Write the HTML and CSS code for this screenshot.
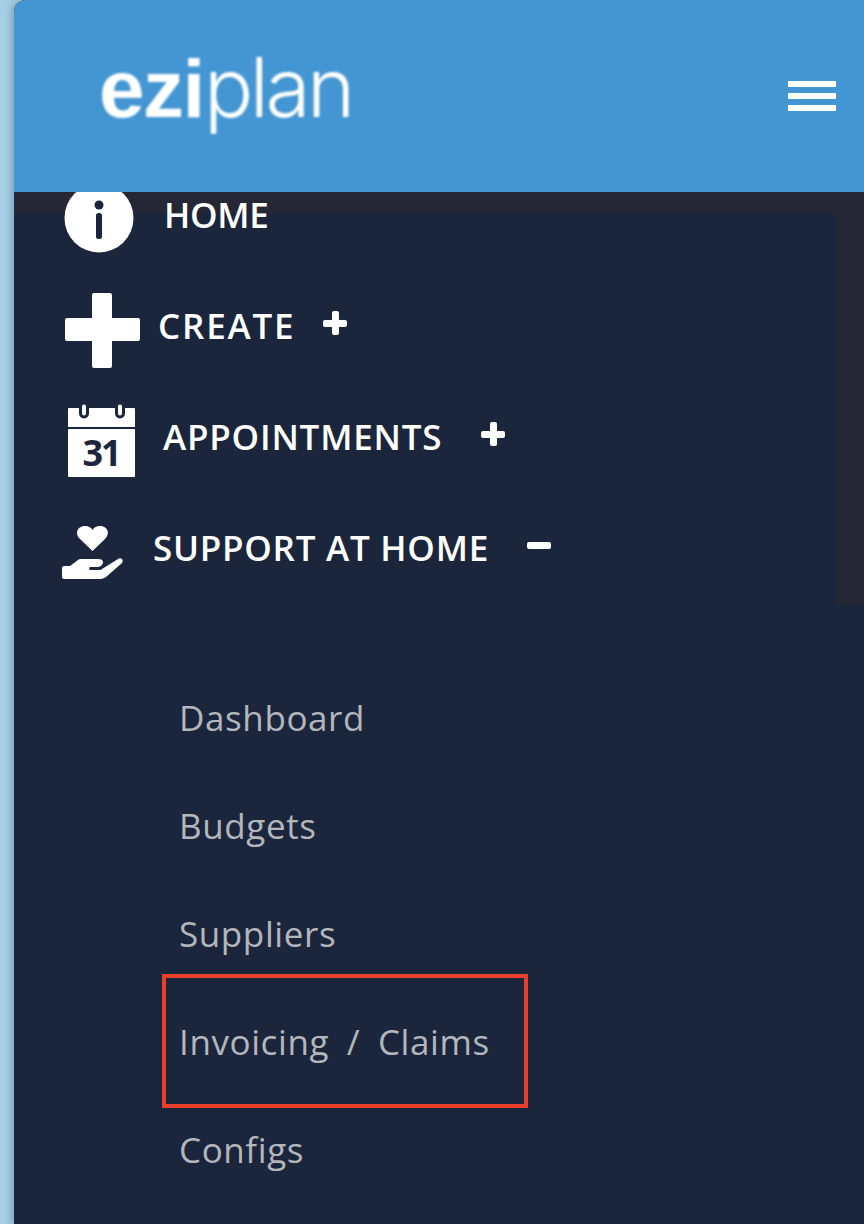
FILE: index.html
```html
<!doctype html>
<html>

<head>
    <link rel="stylesheet" href="styles.css">
</head>

<body>
    <div id="app">
        <header class="topbar">
            <div class="logo"><b>ezi</b><span>plan</span></div>
            <div class="burger"><i></i><i></i><i></i></div>
        </header>
        <div class="sidebar">
            <div class="sidebar-band"></div>
            <nav class="menu">
                <a class="menu-row row-home">
                    <svg class="icon" viewBox="0 0 70 70" width="70" height="70">
                        <circle cx="35" cy="35" r="34.5" fill="#fff" />
                        <circle cx="35" cy="22" r="4.5" fill="#1b263c" />
                        <rect x="32" y="30" width="6" height="26" rx="2.500" fill="#1b263c" />
                    </svg>
                    <span class="label">HOME</span>
                </a>
                <a class="menu-row row-create">
                    <svg class="icon" viewBox="0 0 75 75" width="75" height="75">
                        <path fill="#fff" d="M29 0h16a2 2 0 0 1 2 2v23h26a2 2 0 0 1 2 2v19a2 2 0 0 1-2 2H47v25a2 2 0 0 1-2 2H29a2 2 0 0 1-2-2V48H2a2 2 0 0 1-2-2V27a2 2 0 0 1 2-2h25V2a2 2 0 0 1 2-2z" />
                    </svg>
                    <span class="label">CREATE</span>
                    <span class="toggle plus"></span>
                </a>
                <a class="menu-row row-appts">
                    <svg class="icon" viewBox="0 0 67 74" width="67" height="74">
                        <path fill="#fff" d="M1 5h65a1 1 0 0 1 1 1v18H0V6a1 1 0 0 1 1-1zM1 26h65a1 1 0 0 1 1 1v46a1 1 0 0 1-1 1H1a1 1 0 0 1-1-1V27a1 1 0 0 1 1-1z" />
                        <rect x="12.500" y="0" width="7" height="14" rx="3.500" fill="#fff" stroke="#1b263c" stroke-width="3" />
                        <rect x="48.500" y="0" width="7" height="14" rx="3.500" fill="#fff" stroke="#1b263c" stroke-width="3" />
                        <text class="cal-day" x="33" y="63" text-anchor="middle">31</text>
                    </svg>
                    <span class="label">APPOINTMENTS</span>
                    <span class="toggle plus"></span>
                </a>
                <a class="menu-row row-support">
                    <svg class="icon" viewBox="0 0 62 53" width="62" height="53">
                        <path fill="#fff" d="M30.500 25 L18 13 C12 7 16 0 23 0 C27 0 29.500 2 30.500 4 C31.500 2 34 0 38 0 C45 0 49 7 43 13 Z" />
                        <path fill="#fff" d="M2 40h6l8-6c1-1 2-1 3-1h17c3 0 5 1 5 3 0 3-3 5-6 5h-7c-1 0-1 3 0 3h9c1 0 2 0 3-1l16-10c3-2 6 1 4 4L44 51c-2 1-4 2-6 2H2a2 2 0 0 1-2-2v-9a2 2 0 0 1 2-2z" />
                    </svg>
                    <span class="label">SUPPORT AT HOME</span>
                    <span class="toggle minus"></span>
                </a>
            </nav>
            <ul class="submenu">
                <li>Dashboard</li>
                <li>Budgets</li>
                <li>Suppliers</li>
                <li class="marked">Invoicing / Claims</li>
                <li>Configs</li>
            </ul>
        </div>
    </div>
</body>

</html>
```

FILE: styles.css
```css
html,
body {
    overflow: hidden;
    width: 100%;
    height: 100%;
    margin: 0;
}

body {
    background: #a6cee4;
    font-family: "Open Sans", "Noto Sans", sans-serif;
}

#app {
    margin-left: 14px;
    height: 100%;
    display: flex;
    flex-direction: column;
    border-top-left-radius: 12px;
    overflow: hidden;
    box-shadow: -3px 0 6px rgba(60, 90, 120, 0.35);
    background: #1b263c;
}

.topbar {
    flex: 0 0 192px;
    background: #4496d2;
    display: flex;
    align-items: center;
    justify-content: space-between;
    padding: 0 28px 0 85px;
    position: relative;
    z-index: 2;
}

.logo {
    color: #fff;
    font-family: "Liberation Sans", sans-serif;
    font-size: 82px;
    line-height: 1;
    letter-spacing: -1.5px;
    margin-bottom: 16px;
    filter: blur(0.8px);
}

.logo b {
    font-weight: 700;
}

.logo span {
    font-family: Inter, sans-serif;
    font-weight: 300;
    letter-spacing: -3.5px;
}

.burger i {
    display: block;
    width: 48px;
    height: 6px;
    background: #fff;
    margin: 6px 0;
}

.sidebar {
    flex: 1;
    position: relative;
    min-height: 0;
}

.sidebar-band {
    position: absolute;
    top: 0;
    left: 0;
    right: 0;
    height: 412px;
    box-sizing: border-box;
    border-top: 21px solid #252735;
    border-right: 28px solid #252735;
}

.menu {
    position: relative;
    margin-top: -33px;
    display: flex;
    flex-direction: column;
}

.menu-row {
    display: flex;
    align-items: center;
    height: 111px;
    color: #fff;
    font-size: 35px;
    font-weight: 600;
    letter-spacing: 0.8px;
}

.icon {
    flex: none;
}

.row-home {
    padding-left: 50px;
    letter-spacing: -0.3px;
}

.row-home .icon {
    margin-top: 6px;
}

.row-create {
    padding-left: 51px;
    letter-spacing: 1.8px;
}

.row-create .icon {
    margin-top: 9px;
}

.row-appts {
    padding-left: 54px;
}

.row-appts .icon {
    margin-top: 7px;
}

.row-support {
    padding-left: 48px;
    letter-spacing: 0.75px;
}

.row-support .icon {
    margin-top: 10px;
}

.label {
    margin-left: 30px;
}

.row-create .label {
    margin-left: 18px;
}

.row-appts .label {
    margin-left: 28px;
}

.row-support .label {
    margin-left: 29px;
}

.cal-day {
    font-family: "Open Sans", sans-serif;
    font-weight: 700;
    font-size: 36px;
    letter-spacing: -2px;
    fill: #1b263c;
}

.toggle {
    position: relative;
    display: block;
    width: 24px;
    height: 24px;
    margin: 0 0 5px 28px;
}

.row-appts .toggle {
    margin-left: 39px;
}

.row-support .toggle {
    margin-left: 38px;
}

.toggle::before,
.plus::after {
    content: "";
    position: absolute;
    background: #fff;
    border-radius: 2px;
}

.toggle::before {
    left: 0;
    right: 0;
    top: 8.5px;
    height: 7px;
}

.plus::after {
    top: 0;
    bottom: 0;
    left: 8.5px;
    width: 7px;
}

.submenu {
    list-style: none;
    margin: 61px 0 0;
    padding: 0 0 0 165px;
}

.submenu li {
    position: relative;
    height: 108px;
    line-height: 108px;
    color: #b4b6be;
    font-size: 35px;
    letter-spacing: 0.6px;
    word-spacing: 8px;
}

.marked::after {
    content: "";
    position: absolute;
    top: -14px;
    bottom: -12px;
    left: -17px;
    width: 366px;
    box-sizing: border-box;
    border: 4px solid #e8402a;
}
```
